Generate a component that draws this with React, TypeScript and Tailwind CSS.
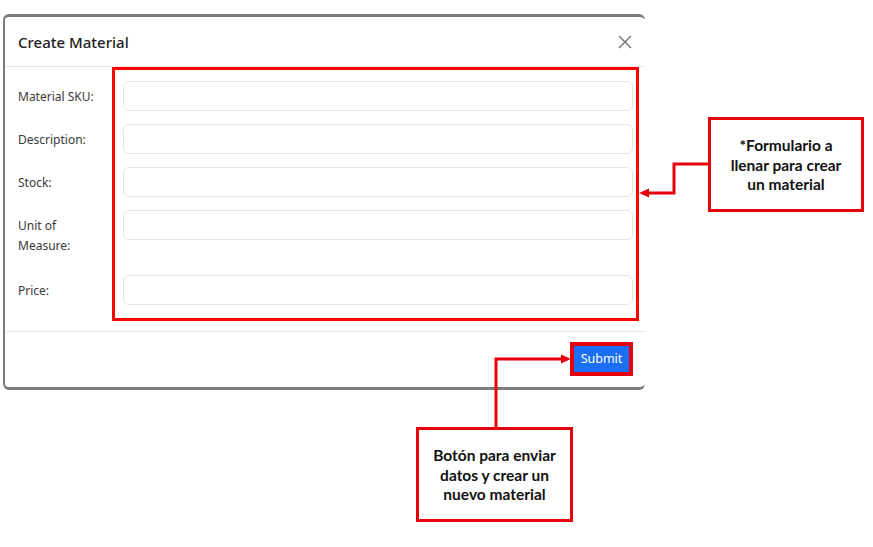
import React from "react";

const fields: { label: string; tall?: boolean }[] = [
  { label: "Material SKU:" },
  { label: "Description:" },
  { label: "Stock:" },
  { label: "Unit of Measure:", tall: true },
  { label: "Price:" },
];

const FormRow: React.FC<{ label: string; tall?: boolean }> = ({ label, tall }) => (
  <div className="mb-[13px] flex items-start">
    <label
      className={`w-[105px] shrink-0 pr-[24px] pt-[6px] text-[12px] leading-[20px] text-[#3a3a3a] ${
        tall ? "pb-[6px]" : "pb-[4px]"
      }`}
    >
      {label}
    </label>
    <input
      type="text"
      className="h-[30px] flex-1 rounded-[6px] border border-[#e2e4e7] bg-white outline-none"
    />
  </div>
);

const Callout: React.FC<{ className: string; lines: string[] }> = ({
  className,
  lines,
}) => (
  <div
    className={`absolute flex flex-col items-center justify-center border-[3px] border-[#e5000c] bg-white pt-[2px] text-center font-['Lato',sans-serif] text-[15.5px] font-bold leading-[19.5px] text-[#111] ${className}`}
  >
    {lines.map((l) => (
      <span key={l}>{l}</span>
    ))}
  </div>
);

export default function App() {
  return (
    <div className="relative h-[547px] w-[873px] overflow-hidden bg-white font-['Noto_Sans',sans-serif]">
      {/* modal */}
      <div className="ml-[3px] mt-[14px] flex w-[642px] flex-col rounded-[6px] border-b-[3px] border-l-[2px] border-t-[3px] border-[#7b7b7b] bg-white">
        <div className="flex h-[50px] items-center justify-between border-b border-[#e3e5e8] pl-[13px] pr-[11px] pt-[1px]">
          <h5 className="text-[15px] font-medium text-[#222]">Create Material</h5>
          <svg width="14" height="14" viewBox="0 0 14 14" className="mr-[2px]">
            <path d="M1 1 L13 13 M13 1 L1 13" stroke="#6f6f6f" strokeWidth="1.4" />
          </svg>
        </div>
        <div className="pb-[13px] pl-[13px] pr-[12px] pt-[14px]">
          {fields.map((f) => (
            <FormRow key={f.label} label={f.label} tall={f.tall} />
          ))}
        </div>
        <div className="flex h-[56px] items-center justify-end border-t border-[#e3e5e8] pr-[13px]">
          <button className="h-[32px] w-[61px] rounded-[4px] bg-[#1a6ff5] text-[12.5px] text-white">
            Submit
          </button>
        </div>
      </div>

      {/* annotation overlays */}
      <div className="absolute left-[112px] top-[67px] h-[254px] w-[527px] border-[3px] border-[#ff0000]" />
      <div className="absolute left-[570px] top-[342px] h-[34px] w-[63px] border-[4px] border-[#e5000c]" />

      <Callout
        className="left-[708px] top-[117px] h-[95px] w-[156px]"
        lines={["*Formulario a", "llenar para crear", "un material"]}
      />
      <Callout
        className="left-[416px] top-[427px] h-[95px] w-[157px]"
        lines={["Botón para enviar", "datos y crear un", "nuevo material"]}
      />

      <svg
        className="pointer-events-none absolute left-0 top-0"
        width="873"
        height="547"
        viewBox="0 0 873 547"
      >
        <polyline
          points="708,164 674,164 674,193 647,193"
          fill="none"
          stroke="#e5000c"
          strokeWidth="3"
        />
        <polygon points="639,193 649,188.5 649,197.5" fill="#e5000c" />
        <polyline
          points="496,427 496,359 562,359"
          fill="none"
          stroke="#e5000c"
          strokeWidth="3"
        />
        <polygon points="571,359 561,354.5 561,363.5" fill="#e5000c" />
      </svg>
    </div>
  );
}
